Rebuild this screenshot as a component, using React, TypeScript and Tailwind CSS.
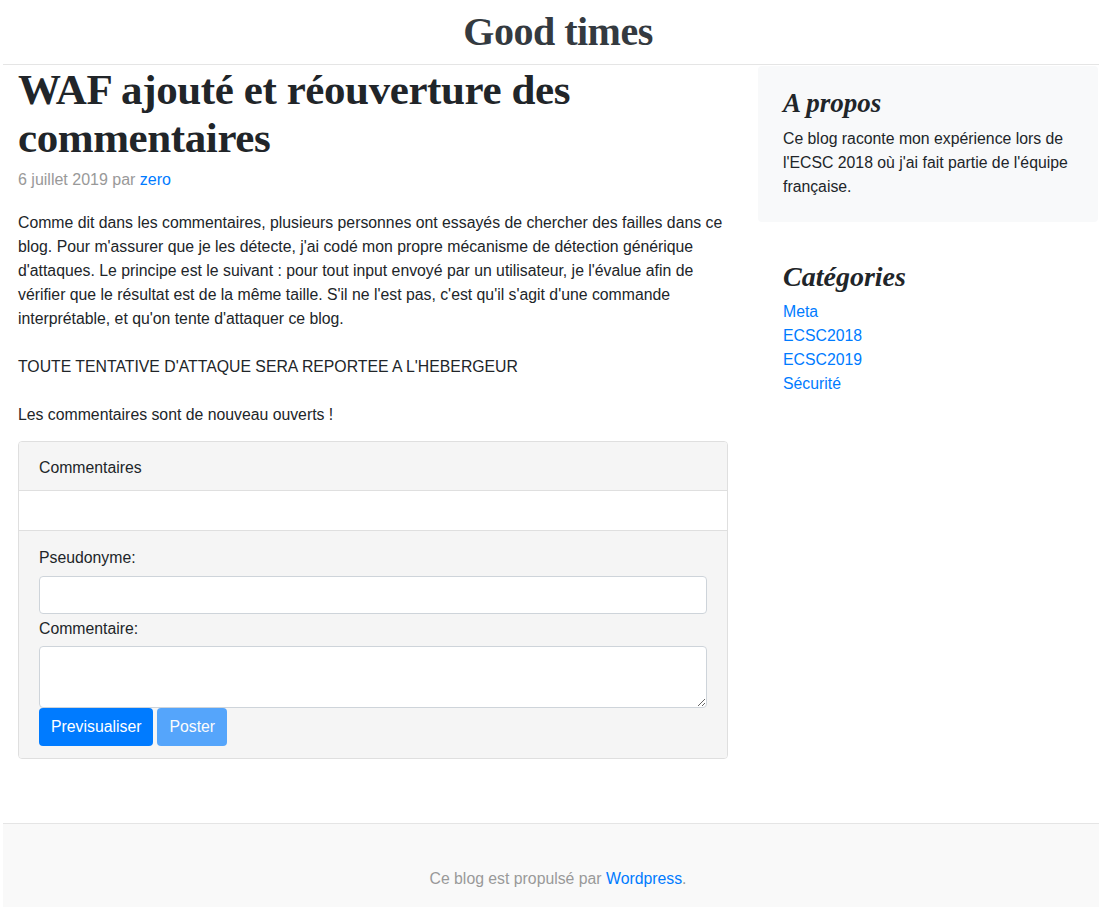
const sans = "font-['Liberation_Sans','Noto_Sans',sans-serif]";
const serif = "font-['Liberation_Serif','DejaVu_Serif',serif]";

export default function App() {
  return (
    <div className={`min-h-screen bg-white text-[#212529] text-[15.8px] ${sans}`}>
      <div className="ml-[3px]">
        {/* Header */}
        <header className="h-[65px] border-b border-[#e5e5e5] flex items-center justify-center pl-[14px]">
          <h1 className={`${serif} text-[40px] font-bold leading-none text-[#343a40] tracking-[-0.5px]`}>
            Good times
          </h1>
        </header>

        {/* Contenu */}
        <div className="flex">
          <main className="w-[740px] shrink-0 px-[15px]">
            <h2 className={`${serif} text-[43px] font-bold leading-[48px] text-[#212529] tracking-[-0.4px] pt-[1px]`}>
              WAF ajouté et réouverture des commentaires
            </h2>
            <p className="text-[16px] leading-6 text-[#999] mt-[6px]">
              6 juillet 2019 par <a className="text-[#007bff]">zero</a>
            </p>

            <div className="mt-[19px] leading-6">
              <p>
                Comme dit dans les commentaires, plusieurs personnes ont essayés de chercher des failles dans ce
                blog. Pour m'assurer que je les détecte, j'ai codé mon propre mécanisme de détection générique
                d'attaques. Le principe est le suivant : pour tout input envoyé par un utilisateur, je l'évalue afin de
                vérifier que le résultat est de la même taille. S'il ne l'est pas, c'est qu'il s'agit d'une commande
                interprétable, et qu'on tente d'attaquer ce blog.
              </p>
              <p className="mt-6">TOUTE TENTATIVE D'ATTAQUE SERA REPORTEE A L'HEBERGEUR</p>
              <p className="mt-6">Les commentaires sont de nouveau ouverts !</p>
            </div>

            <CommentsCard />
          </main>

          <aside className="flex-1 pl-[15px] pr-px">
            <div className="mt-px bg-[#f8f9fa] rounded-[4px] px-[25px] pt-[22px] pb-[23px]">
              <h3 className={`${serif} italic font-bold text-[27px] leading-[30px] text-[#212529]`}>
                A propos
              </h3>
              <p className="mt-[9px] leading-6">
                Ce blog raconte mon expérience lors de l'ECSC 2018 où j'ai fait partie de l'équipe française.
              </p>
            </div>

            <div className="px-[25px] pt-[38px]">
              <h3 className={`${serif} italic font-bold text-[28px] leading-[34px] text-[#212529]`}>
                Catégories
              </h3>
              <ul className="mt-[6px] leading-6 text-[#007bff]">
                <li>Meta</li>
                <li>ECSC2018</li>
                <li>ECSC2019</li>
                <li>Sécurité</li>
              </ul>
            </div>
          </aside>
        </div>

        {/* Footer */}
        <footer className="mt-[64px] border-t border-[#e5e5e5] bg-[#f9f9f9] h-[90px] flex items-center justify-center pl-[14px] pt-[21px] text-[#999]">
          <p>
            Ce blog est propulsé par <a className="text-[#007bff]">Wordpress</a>.
          </p>
        </footer>
      </div>
    </div>
  );
}

function CommentsCard() {
  return (
    <div className="mt-[14px] border border-[#dfdfdf] rounded-[4px] overflow-hidden">
      <div className="bg-[#f5f5f5] h-[49px] px-5 pt-[4px] flex items-center border-b border-[#dfdfdf]">
        Commentaires
      </div>
      <div className="h-10 bg-white border-b border-[#dfdfdf]" />
      <div className="bg-[#f5f5f5] px-5 pt-[15px] pb-3">
        <label className="block leading-6">Pseudonyme:</label>
        <input className="mt-[6px] block w-full h-[38px] bg-white border border-[#ced4da] rounded-[4px]" />
        <label className="block leading-6 mt-[3px]">Commentaire:</label>
        <textarea className="mt-[5px] block w-full h-[62px] bg-white border border-[#ced4da] rounded-[4px] resize-y" />
        <div className="flex gap-1">
          <button className="h-[38px] px-3 rounded-[4px] bg-[#007bff] text-white">Previsualiser</button>
          <button className="h-[38px] px-3 rounded-[4px] bg-[#007bff] opacity-65 text-white">Poster</button>
        </div>
      </div>
    </div>
  );
}
